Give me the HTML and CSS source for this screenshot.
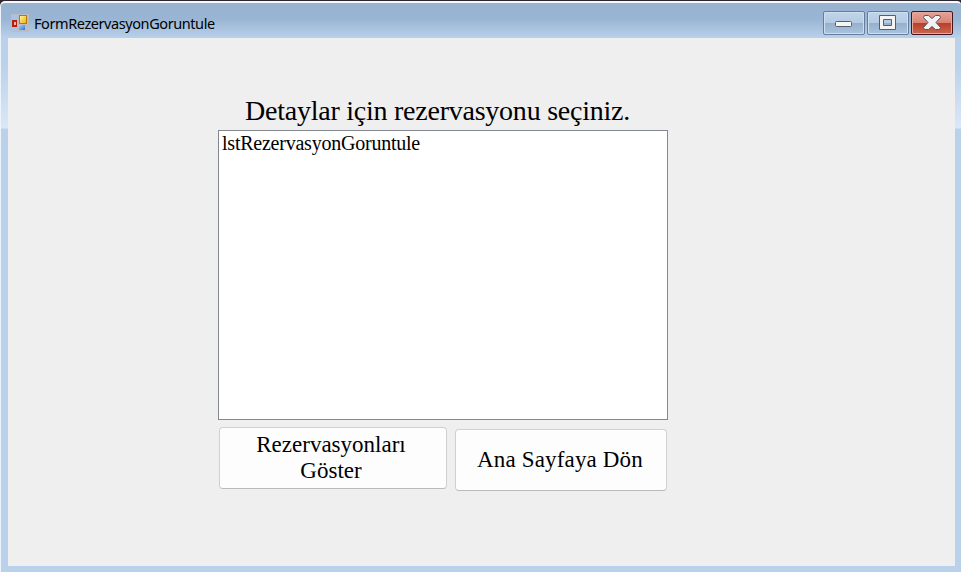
FILE: index.html
```
<!DOCTYPE html>
<html lang="tr">
<head>
<meta charset="utf-8">
<title>FormRezervasyonGoruntule</title>
<link rel="stylesheet" href="styles.css">
</head>
<body>
<div class="window">
  <header class="titlebar">
    <svg class="app-icon" width="18" height="18" viewBox="0 0 18 18" shape-rendering="crispEdges">
      <defs>
        <linearGradient id="gold" x1="0" y1="0" x2="1" y2="1"><stop offset="0" stop-color="#fff3a0"/><stop offset="1" stop-color="#f2b40c"/></linearGradient>
        <linearGradient id="blue" x1="0" y1="0" x2="1" y2="1"><stop offset="0" stop-color="#a9d0ff"/><stop offset="1" stop-color="#2f6fdc"/></linearGradient>
      </defs>
      <path d="M0 0H18V18H0Z" fill="#b9bec5"/>
      <path d="M1 1H6V5H1ZM1 14H6V17H1Z" fill="#a9c3e0"/>
      <path d="M1 6H6V13H1Z" fill="#b81d10"/>
      <path d="M3 8H5V11H3Z" fill="#f3b3a5"/>
      <path d="M8 1H16V10H8Z" fill="#b57a08"/>
      <path d="M9 2H15V9H9Z" fill="url(#gold)"/>
      <path d="M8 11H14V16H8Z" fill="url(#blue)"/>
    </svg>
    <h1 class="title">FormRezervasyonGoruntule</h1>
    <div class="controls">
      <button class="control" aria-label="Minimize"><svg width="40" height="22" viewBox="0 0 40 22"><rect x="11.5" y="9.5" width="16" height="5" rx="1" fill="#f4f4f4" stroke="#555e6b"/></svg></button>
      <button class="control" aria-label="Maximize"><svg width="40" height="22" viewBox="0 0 40 22"><path d="M11.500 3.500H27.500V17.500H11.500ZM15.500 7.500V13.500H23.500V7.500Z" fill="#f4f4f4" fill-rule="evenodd" stroke="#555e6b" stroke-linejoin="round"/></svg></button>
      <button class="control close" aria-label="Close"><svg width="40" height="22" viewBox="0 0 40 22"><path d="M12.500 3.500H16.500L20 6.500L23.500 3.500H27.500L28.500 5.500L24 10.500L28.500 15.500L27.500 17.500H23.500L20 14.500L16.500 17.500H12.500L11.500 15.500L16 10.500L11.500 5.500Z" fill="#f2f2f2" stroke="#555762" stroke-linejoin="round"/></svg></button>
    </div>
  </header>
  <main class="client">
    <section class="form">
      <p class="prompt"><span>Detaylar için rezervasyonu seçiniz.</span></p>
      <div class="list"><span class="item">lstRezervasyonGoruntule</span></div>
      <div class="actions">
        <button class="action show"><span>Rezervasyonları<br>Göster</span></button>
        <button class="action home"><span>Ana Sayfaya Dön</span></button>
      </div>
    </section>
  </main>
</div>
</body>
</html>
```
FILE: styles.css
```
* { box-sizing: border-box; }
html { background: #2b2730; }
body { margin: 0; height: 572px; overflow: hidden; }
button { padding: 0; font: inherit; color: inherit; }
.window {
  height: 571px;
  margin-top: 1px;
  padding: 0 6px 6px 7px;
  border-left: 1px solid #edf3fa;
  border-top: 2px solid #f7f9fc;
  border-top-left-radius: 5px;
  border-top-right-radius: 4px;
  background:
    linear-gradient(#99b4d1 0, #9ab5d3 16px, #b9d1ea 35px, #b9d1ea 60px, #dae8f7 125px, #b9d1ea 126px);
}
.titlebar { display: flex; height: 35px; align-items: flex-start; }
.app-icon { display: block; margin: 11px 0 0 3px; }
.title {
  margin: 10px 0 0 5px;
  font: 400 14.500px/20px "Noto Sans", sans-serif;
  color: #000;
  letter-spacing: -0.42px;
}
.controls { display: flex; gap: 2px; margin: 8px 2px 0 auto; }
.control {
  width: 42px;
  height: 24px;
  border: 1px solid #667e9c;
  border-radius: 2px;
  box-shadow: inset 0 0 0 1px #cfdfef;
  background: linear-gradient(#c2d5e9 0, #b4cbe3 48%, #96b0cc 49%, #a9c3df 100%);
}
.control svg { display: block; }
.close {
  border-color: #431422;
  box-shadow: inset 0 0 0 1px #e3aaa0;
  background: linear-gradient(#e5a297 0, #d98474 48%, #b93c25 49%, #cc6850 100%);
}
.client {
  height: 528px;
  padding: 56px 0 0 210px;
  background: #efefef;
}
.form {
  width: 450px;
  color: #000;
  font-family: "Liberation Serif", serif;
}
.prompt {
  margin: 0;
  padding-left: 27px;
  height: 36px;
  font-size: 28px;
  line-height: 34px;
  letter-spacing: -0.24px;
  white-space: nowrap;
}
.list {
  height: 290px;
  padding: 1px 3px;
  border: 1px solid #828790;
  background: #fff;
  font-size: 20px;
  line-height: 23px;
  letter-spacing: -0.23px;
}
.actions { display: flex; gap: 8px; padding: 7px 1px 0; }
.action {
  height: 62px;
  border: 1px solid #d0d0d0;
  border-bottom-color: #bababa;
  border-radius: 4px;
  background: #fdfdfd;
  font-size: 23px;
  line-height: 26px;
}
.show { width: 228px; padding: 0 4px 1px 0; }
.home { width: 212px; margin-top: 2px; padding: 0 4px 1px 0; padding-right: 2px; letter-spacing: 0.15px; }
```
